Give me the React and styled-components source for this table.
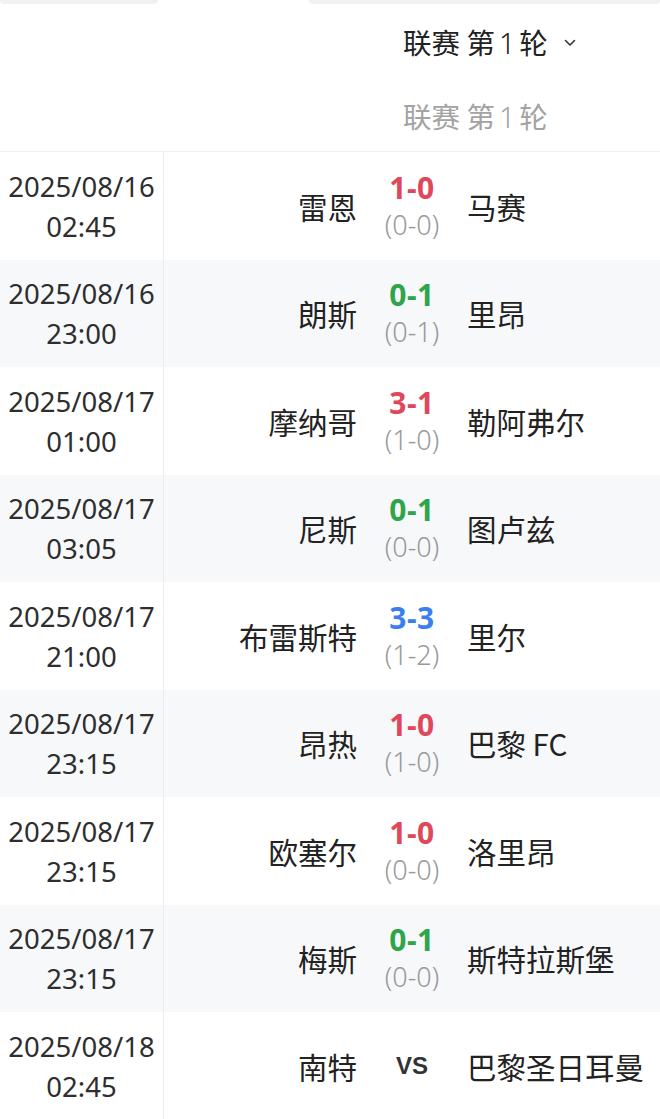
import React from "react";
import styled, { createGlobalStyle } from "styled-components";

const Global = createGlobalStyle`
  html, body { margin: 0; padding: 0; background: #fff; }
  body { font-family: "Noto Sans", "Noto Sans CJK SC", sans-serif; color: #222; }
`;

const Page = styled.div`
  width: 660px;
  display: flex;
  flex-direction: column;
`;

const TabStrip = styled.div`
  display: flex;
  height: 4px;
`;

const TabStub = styled.div`
  flex: ${(p) => (p.$grow ? 1 : "none")};
  width: ${(p) => (p.$w ? `${p.$w}px` : "auto")};
  background: ${(p) => (p.$active ? "#fff" : "#f1f1f3")};
  border-radius: 0 0 4px 4px;
`;

const Header = styled.div`
  height: 148px;
  display: flex;
  flex-direction: column;
  justify-content: flex-start;
  padding-left: 403px;
  border-bottom: 1px solid #f0f0f2;
  box-sizing: border-box;
`;

const RoundSelect = styled.div`
  display: flex;
  align-items: center;
  gap: 16px;
  font-family: "Noto Sans CJK SC", sans-serif;
  font-size: 28.5px;
  line-height: 40px;
  color: #222;
  margin-top: 18px;
`;

const RoundLabel = styled.div`
  font-family: "Noto Sans CJK SC", sans-serif;
  font-size: 28.5px;
  line-height: 40px;
  color: #a3a3a3;
  margin-top: 33px;
`;

const Num = styled.span`
  font-family: "Noto Sans", sans-serif;
  font-weight: 300;
  margin: 0 4px;
`;

const Row = styled.div`
  display: flex;
  height: 107.5px;
  background: ${(p) => (p.$alt ? "#f7f8fa" : "#fff")};
`;

const DateCell = styled.div`
  width: 164px;
  flex: none;
  border-right: 1px solid #ececee;
  display: flex;
  flex-direction: column;
  align-items: center;
  justify-content: center;
  font-size: 27.5px;
  line-height: 40px;
  color: #2e2e2e;
  padding-top: 2px;
  box-sizing: border-box;
`;

const Match = styled.div`
  flex: 1;
  display: grid;
  grid-template-columns: 1fr 110px 1fr;
  align-items: center;
`;

const Team = styled.div`
  font-family: "Noto Sans CJK SC", sans-serif;
  font-size: 29.5px;
  line-height: 40px;
  color: #222;
  text-align: ${(p) => (p.$home ? "right" : "left")};
  white-space: nowrap;
`;

const ScoreCell = styled.div`
  display: flex;
  flex-direction: column;
  align-items: center;
  justify-content: center;
`;

const Score = styled.div`
  font-family: "Noto Sans", sans-serif;
  font-weight: 700;
  font-size: 30px;
  line-height: 38px;
  color: ${(p) => p.$color};
  letter-spacing: 0.5px;
`;

const Half = styled.div`
  font-family: "Noto Sans", sans-serif;
  font-weight: 300;
  font-size: 27px;
  line-height: 36px;
  color: #999;
`;

const Vs = styled.div`
  font-family: "Liberation Sans", sans-serif;
  font-weight: 700;
  font-size: 24px;
  color: #333;
`;

const COLORS = { red: "#e0475b", green: "#2ea54a", blue: "#3a7ff0" };

const matches = [
  { d: "2025/08/16", t: "02:45", h: "雷恩", a: "马赛", s: "1-0", ht: "(0-0)", c: "red" },
  { d: "2025/08/16", t: "23:00", h: "朗斯", a: "里昂", s: "0-1", ht: "(0-1)", c: "green" },
  { d: "2025/08/17", t: "01:00", h: "摩纳哥", a: "勒阿弗尔", s: "3-1", ht: "(1-0)", c: "red" },
  { d: "2025/08/17", t: "03:05", h: "尼斯", a: "图卢兹", s: "0-1", ht: "(0-0)", c: "green" },
  { d: "2025/08/17", t: "21:00", h: "布雷斯特", a: "里尔", s: "3-3", ht: "(1-2)", c: "blue" },
  { d: "2025/08/17", t: "23:15", h: "昂热", a: "巴黎 FC", s: "1-0", ht: "(1-0)", c: "red" },
  { d: "2025/08/17", t: "23:15", h: "欧塞尔", a: "洛里昂", s: "1-0", ht: "(0-0)", c: "red" },
  { d: "2025/08/17", t: "23:15", h: "梅斯", a: "斯特拉斯堡", s: "0-1", ht: "(0-0)", c: "green" },
  { d: "2025/08/18", t: "02:45", h: "南特", a: "巴黎圣日耳曼", s: null },
];

const Chevron = () => (
  <svg width="12" height="8" viewBox="0 0 12 8" fill="none">
    <path d="M1.5 1.5 L6 6 L10.5 1.5" stroke="#333" strokeWidth="1.6" strokeLinecap="round" strokeLinejoin="round" />
  </svg>
);

const RoundText = () => (
  <span>
    联赛 第<Num>1</Num>轮
  </span>
);

export default function App() {
  return (
    <Page>
      <Global />
      <TabStrip>
        <TabStub $w={158} />
        <TabStub $w={151} $active />
        <TabStub $grow />
      </TabStrip>
      <Header>
        <RoundSelect>
          <RoundText />
          <Chevron />
        </RoundSelect>
        <RoundLabel>
          <RoundText />
        </RoundLabel>
      </Header>
      {matches.map((m, i) => (
        <Row key={i} $alt={i % 2 === 1}>
          <DateCell>
            <div>{m.d}</div>
            <div>{m.t}</div>
          </DateCell>
          <Match>
            <Team $home>{m.h}</Team>
            <ScoreCell>
              {m.s ? (
                <>
                  <Score $color={COLORS[m.c]}>{m.s}</Score>
                  <Half>{m.ht}</Half>
                </>
              ) : (
                <Vs>VS</Vs>
              )}
            </ScoreCell>
            <Team>{m.a}</Team>
          </Match>
        </Row>
      ))}
    </Page>
  );
}
